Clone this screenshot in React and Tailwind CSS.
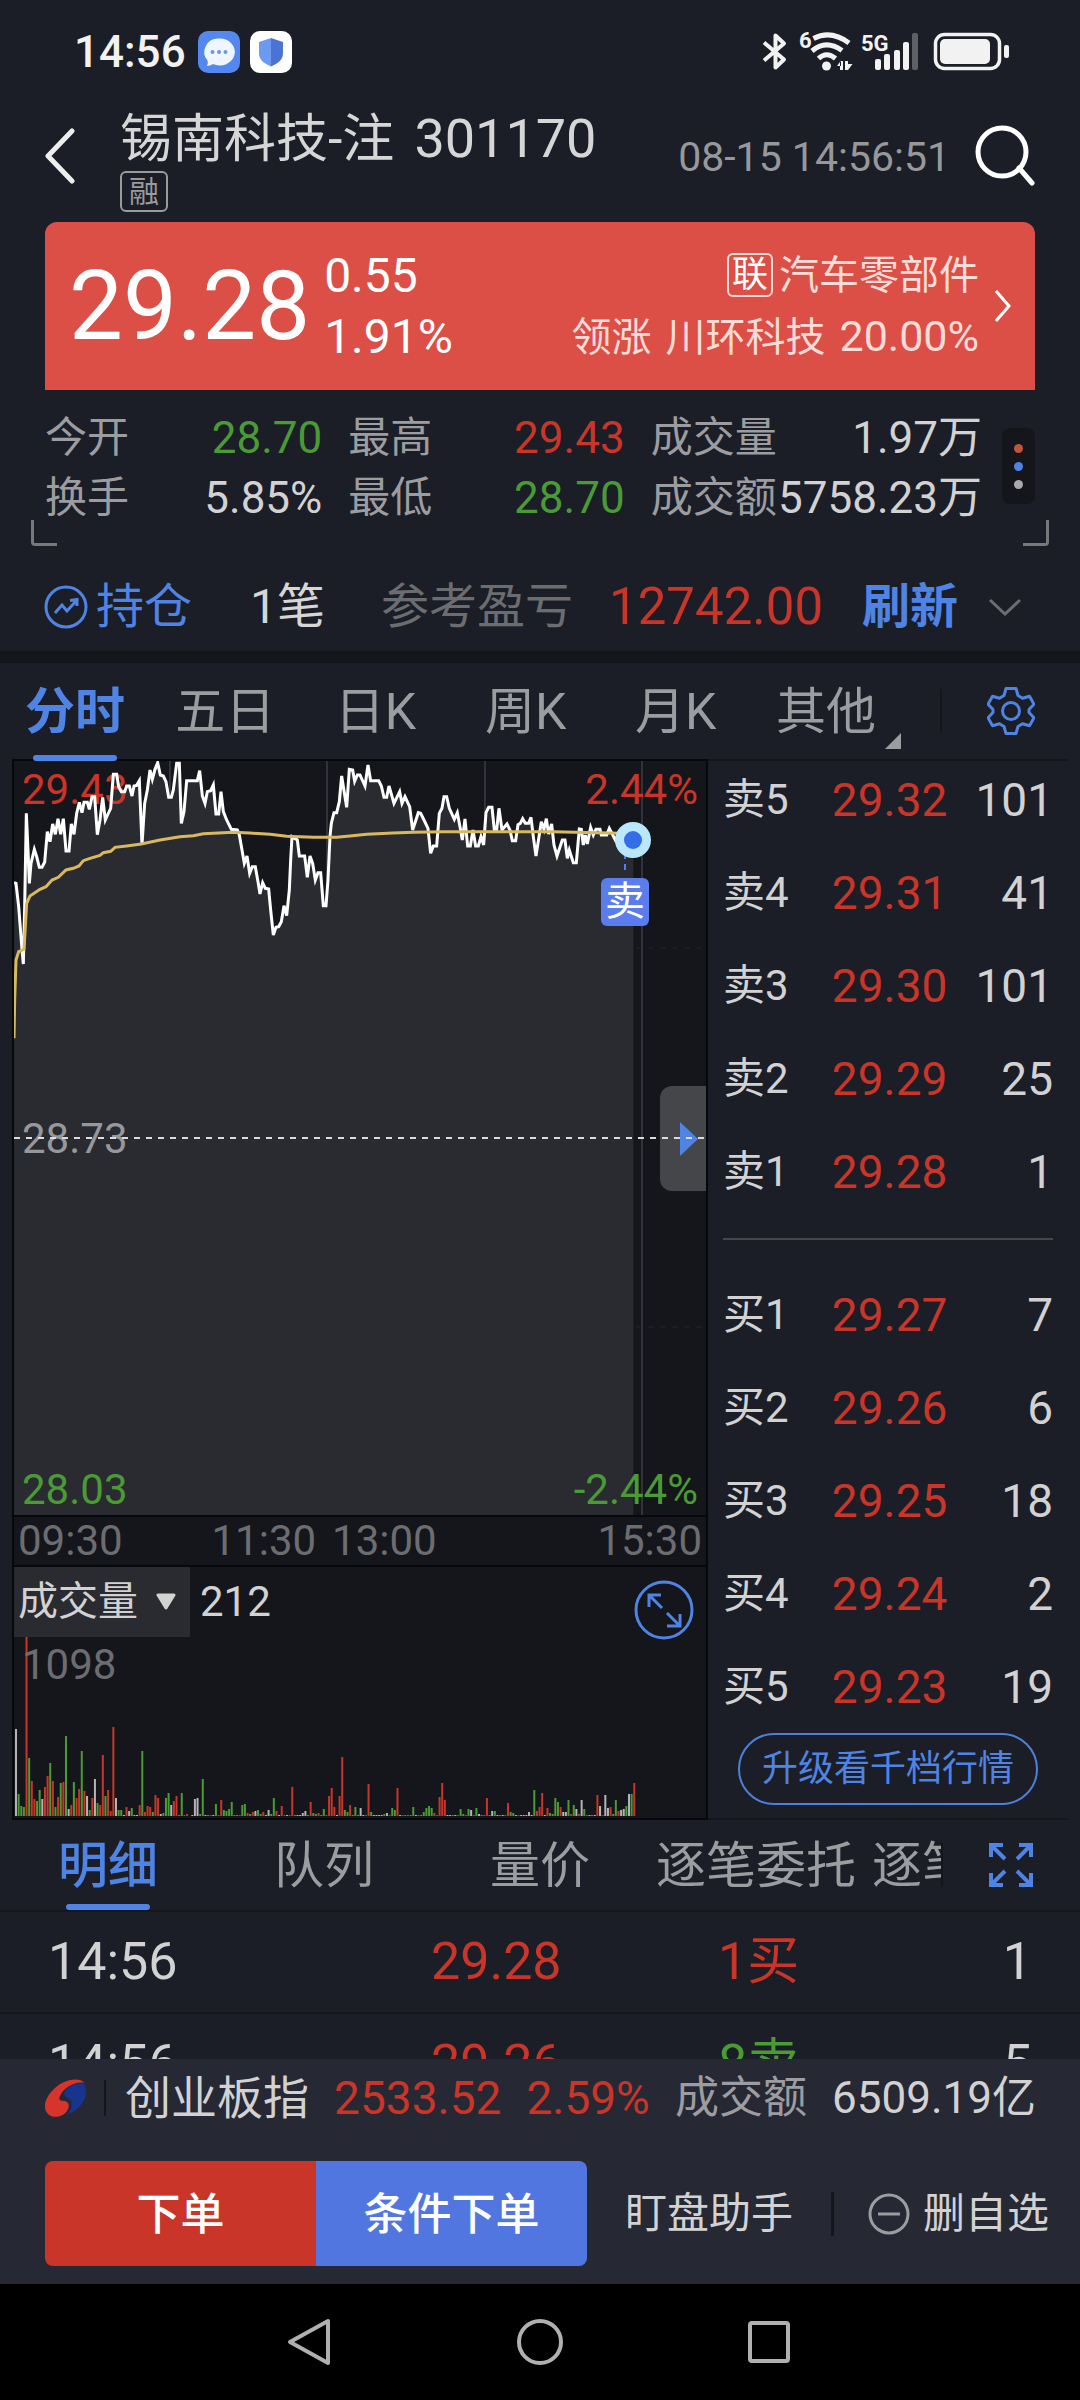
import React, { useState } from "react";

const RED = "#c93529";
const GREEN = "#4a9a35";

const sellOrders = [
  { label: "卖5", price: "29.32", count: 101 },
  { label: "卖4", price: "29.31", count: 41 },
  { label: "卖3", price: "29.30", count: 101 },
  { label: "卖2", price: "29.29", count: 25 },
  { label: "卖1", price: "29.28", count: 1 },
];

const buyOrders = [
  { label: "买1", price: "29.27", count: 7 },
  { label: "买2", price: "29.26", count: 6 },
  { label: "买3", price: "29.25", count: 18 },
  { label: "买4", price: "29.24", count: 2 },
  { label: "买5", price: "29.23", count: 19 },
];

const trades = [
  { time: "14:56", price: "29.28", side: "1买", color: "text-[#c93529]", count: 1 },
  { time: "14:56", price: "29.26", side: "8卖", color: "text-[#4a9a35]", count: 5 },
];

const pricePoints =
  "42,428 48,430 56,500 66,630 70,672 74,500 79,220 84,330 88,430 93,370 103,328 110,350 118,382 126,382 134,366 142,275 150,305 158,252 166,283 174,236 182,283 190,236 198,333 207,333 214,252 222,283 230,220 238,187 246,218 252,187 262,187 268,208 276,170 284,170 292,284 300,240 308,172 316,240 324,222 332,205 340,103 350,103 356,140 364,155 374,155 380,138 388,138 396,168 402,138 410,136 418,122 426,315 434,190 442,150 450,90 457,118 465,88 473,68 481,105 490,108 498,125 506,172 514,172 520,150 530,70 538,70 544,250 552,215 560,122 592,122 599,92 607,168 615,190 622,155 632,152 640,135 648,222 656,222 663,155 670,215 680,240 694,268 712,270 718,285 726,330 733,370 741,348 749,400 757,380 766,380 774,425 780,462 788,428 796,445 806,447 812,510 820,585 828,562 836,560 844,545 852,497 860,527 868,450 872,360 876,290 892,300 898,348 914,348 922,412 930,348 938,370 946,420 954,398 962,398 970,497 978,497 984,420 990,290 994,250 1002,218 1010,218 1018,185 1025,108 1040,202 1048,88 1058,90 1064,124 1072,105 1080,105 1095,138 1104,75 1112,122 1136,122 1144,138 1152,172 1160,172 1167,138 1182,190 1199,155 1206,190 1215,170 1229,200 1238,270 1255,218 1262,220 1272,240 1284,265 1292,340 1300,318 1310,318 1318,220 1326,205 1332,170 1340,170 1348,205 1363,238 1372,218 1380,260 1387,300 1395,237 1403,318 1411,318 1419,270 1427,318 1435,318 1443,290 1451,315 1458,218 1466,202 1476,202 1483,270 1490,270 1497,205 1506,270 1521,252 1530,270 1537,302 1547,302 1554,254 1561,250 1568,236 1576,250 1586,250 1593,232 1600,290 1608,348 1624,245 1632,268 1639,236 1646,282 1655,252 1662,315 1671,348 1687,300 1695,300 1702,355 1708,330 1720,368 1729,368 1738,267 1744,268 1750,315 1756,285 1762,312 1772,262 1780,285 1788,268 1800,268 1804,285 1820,285 1828,265 1846,300 1854,285 1900,300";

const averagePoints =
  "42,895 44,780 48,660 56,635 72,628 76,560 80,490 90,468 120,448 138,440 156,420 175,412 198,390 220,385 237,378 250,362 270,355 300,346 310,338 332,334 345,322 380,318 424,312 480,300 540,290 580,287 610,281 700,277 750,279 810,283 860,289 940,292 1010,292 1050,288 1100,283 1180,279 1240,277 1330,275 1660,275 1860,280";

// one bar per minute: colour letter + height
const volumeBars =
  "w87 g22 g10 g9 r196 g58 r35 r17 g15 g26 w17 r29 r40 g53 r35 g9 r19 g33 r34 g80 w7 r11 g34 r18 r27 g65 r25 w20 g6 r18 w37 g13 r11 r61 g20 r26 r5 r89 w18 g6 g6 w1 r9 w5 g8 w1 w1 r11 g65 r4 r10 r9 g4 r21 r18 w2 g3 g18 g23 w11 r15 r20 g1 g23 r1 r2 w0 w1 w17 w18 g2 g37 w1 g1 r1 w1 g12 r1 r16 g6 g5 g7 g14 g1 g1 r1 g11 g12 r3 g2 r4 w5 g6 g2 r4 w1 w6 g2 g18 r5 w1 r10 r1 w1 r1 r29 g1 w1 w1 w3 w5 g1 r14 g3 g2 r3 g1 g7 r1 r20 r28 r9 w1 r20 r59 g6 g4 r11 g1 g9 g1 w8 w1 r1 r32 g4 w1 w1 w1 w1 g2 w3 r1 g8 g6 r28 w1 r1 g1 r1 g1 g9 w1 r1 g1 g4 g8 g10 g8 r3 r1 r19 r33 r16 w1 w1 g1 w1 r1 g7 g2 r1 g7 w6 r1 g8 w2 g1 r1 r18 g1 w5 g5 w1 g1 w1 r1 r13 g4 g3 w1 r1 w1 w1 w1 w4 w1 g26 r5 r9 r23 w1 r8 g3 g2 g18 g14 r9 w4 w4 g16 r2 g11 w7 r2 w16 g7 r1 w1 g1 w1 r21 w10 r1 w21 w8 r9 g2 g16 r5 w6 w7 g10 w22 g22 r33".split(" ");

const barColors = { r: RED, g: GREEN, w: "#b4b4b6" };

const StatusBar = () => (
  <div className="flex h-26 shrink-0 items-center justify-between pl-[74px] pr-[70px]">
    <div className="flex items-center gap-[10px]">
      <span className="mr-[2px] text-[44px] leading-none font-medium text-[#f2f2f2]">14:56</span>
      <svg className="size-[42px]" viewBox="0 0 42 42">
        <rect width="42" height="42" rx="10" fill="#5488ee" />
        <path d="M21 7.500a15 13.500 0 1 1-6 25.500q-3 2-6 2 1.500-3 .5-5.500A14 13.500 0 0 1 21 7.500z" fill="#eef7ff" />
        <circle cx="14.500" cy="21" r="2" fill="#6f97dd" />
        <circle cx="21" cy="21" r="2" fill="#6f97dd" />
        <circle cx="27.500" cy="21" r="2" fill="#6f97dd" />
      </svg>
      <svg className="size-[42px]" viewBox="0 0 42 42">
        <rect width="42" height="42" rx="10" fill="#ffffff" />
        <path d="M21 7 9 11v11c0 7 5 10.500 12 13.500z" fill="#6c9af0" />
        <path d="M21 7l12 4v11c0 7-5 10.500-12 13.500z" fill="#4b73d3" />
      </svg>
    </div>
    <svg className="h-[42px] w-[250px] overflow-visible" viewBox="0 0 250 42" fill="none" stroke="#f2f2f2">
      <path d="M4 11.500 24 28.500 15.500 36.500V4.500L24 12.500 4 29.500" strokeWidth="4" strokeLinejoin="round" />
      <text x="39" y="17" fontSize="22" fontWeight="700" fill="#f2f2f2" stroke="none">6</text>
      <g strokeWidth="5">
        <path d="M53.500 7.500Q71 -1.500 89 12" />
        <path d="M52 20Q66 8 82 19.500" />
        <path d="M58.500 27.500Q66.500 20 75.500 27.500" />
      </g>
      <circle cx="66.500" cy="35" r="4.500" fill="#f2f2f2" stroke="none" />
      <path d="M77 35h4v-5.500zM80 30h3v9h-3zM85 30h3v9h-3zM88 39v-6h4.500z" fill="#f2f2f2" stroke="none" />
      <text x="101" y="20" fontSize="22" fontWeight="700" fill="#f2f2f2" stroke="none">5G</text>
      <g fill="#f2f2f2" stroke="none">
        <rect x="115" y="28" width="6" height="11" rx="2" />
        <rect x="124" y="23" width="6" height="16" rx="2" />
        <rect x="134" y="19" width="6" height="20" rx="2" />
        <rect x="143" y="11" width="6" height="28" rx="2" />
        <rect x="152" y="2" width="6" height="37" rx="2" fill="#5d6065" />
        <rect x="180" y="8" width="50" height="25" rx="5" />
        <rect x="244" y="14" width="5" height="13" rx="2" />
      </g>
      <rect x="175.500" y="3.500" width="64" height="34" rx="9" strokeWidth="3.500" />
    </svg>
  </div>
);

const Header = () => (
  <header className="flex h-[118px] shrink-0 justify-between pl-[44px] pr-11">
    <div className="flex">
      <button aria-label="返回" className="mr-[45px] mt-[24px] self-start">
        <svg className="h-[56px] w-[31px]" viewBox="0 0 31 56" fill="none" stroke="#eeeeee" strokeWidth="5">
          <path d="M28 3 4 28l24 25" strokeLinecap="round" strokeLinejoin="round" />
        </svg>
      </button>
      <div className="flex flex-col items-start pt-1">
        <h1 className="text-[52px] leading-[62px] text-[#d6d6d6]">
          锡南科技-注<span className="ml-5 text-[54px]">301170</span>
        </h1>
        <span className="rounded-md border-2 border-[#9b9b9d] px-[7px] text-[30px] leading-[37px] text-[#9b9b9d]">
          融
        </span>
      </div>
    </div>
    <div className="flex h-[104px] items-center gap-6">
      <time className="pt-1 text-[41px] text-[#97989b]">08-15 14:56:51</time>
      <button aria-label="搜索">
        <svg className="size-[62px]" viewBox="0 0 62 62" fill="none" stroke="#ffffff" strokeWidth="5">
          <circle cx="28" cy="27" r="24" />
          <path d="M45 43 58 58" strokeLinecap="round" />
        </svg>
      </button>
    </div>
  </header>
);

const PriceBanner = () => (
  <section className="mx-[45px] flex h-[168px] shrink-0 items-center justify-between rounded-t-xl bg-[#dc4f46] pl-6 pr-6 text-white">
    <div className="flex items-center gap-[14px]">
      <span className="text-[96px] leading-none">29.28</span>
      <div className="text-[48px] leading-[61px]">
        <p>0.55</p>
        <p>1.91%</p>
      </div>
    </div>
    <a href="#industry" className="flex items-center gap-4 text-[40px] leading-[61px] text-[#fbdcd8]">
      <div className="text-right">
        <p className="flex items-center justify-end gap-[6px]">
          <span className="rounded-md border-2 border-[#fbdcd8] px-[3px] text-[36px] leading-[40px] text-white">联</span>
          汽车零部件
        </p>
        <p className="flex items-baseline justify-end gap-[14px]">
          <span>领涨</span>
          <span>川环科技</span>
          <span className="text-[43px]">20.00%</span>
        </p>
      </div>
      <svg className="h-[32px] w-[16px]" viewBox="0 0 16 32" fill="none" stroke="#ffffff" strokeWidth="3">
        <path d="M1 1 14 16 1 31" />
      </svg>
    </a>
  </section>
);

const Stat = ({ label, value, color = "text-[#d2d2d3]" }) => (
  <div className="flex items-center justify-between">
    <dt className="text-[42px] text-[#9c9da0]">{label}</dt>
    <dd className={`text-[44px] ${color}`}>{value}</dd>
  </div>
);

const Stats = () => (
  <section className="relative mx-[31px] h-[156px] shrink-0 pl-[14px] pr-[14px] pt-[18px]">
    <div className="flex items-center">
      <dl className="grid flex-1 grid-cols-[277fr_276fr_331fr] gap-x-[26px] leading-[60px]">
        <Stat label="今开" value="28.70" color="text-[#4a9a35]" />
        <Stat label="最高" value="29.43" color="text-[#c93529]" />
        <Stat label="成交量" value="1.97万" />
        <Stat label="换手" value="5.85%" />
        <Stat label="最低" value="28.70" color="text-[#4a9a35]" />
        <Stat label="成交额" value="5758.23万" />
      </dl>
      <button aria-label="更多指标" className="mb-1 ml-5 flex h-[76px] w-[33px] flex-col items-center justify-center gap-[9px] rounded-lg bg-[#15161b]">
        <span className="size-[9px] rounded-full bg-[#c0553f]" />
        <span className="size-[9px] rounded-full bg-[#4f83e4]" />
        <span className="size-[9px] rounded-full bg-[#a9a9aa]" />
      </button>
    </div>
    <span className="absolute bottom-0 left-0 size-[26px] rounded-bl border-b-3 border-l-3 border-[#77787b]" />
    <span className="absolute bottom-0 right-0 size-[26px] rounded-br border-b-3 border-r-3 border-[#77787b]" />
  </section>
);

const Position = () => (
  <section className="flex h-[117px] shrink-0 items-center border-b-12 border-[#15161b] pl-11 pr-[58px] pt-4 text-[48px] leading-none">
    <svg className="mr-2 size-[44px]" viewBox="0 0 44 44" fill="none" stroke="#4f83e4" strokeWidth="3">
      <circle cx="22" cy="22" r="20" />
      <path d="M11 28 18 20l5 6 10-11M26 15.500 33 14.500V21" />
    </svg>
    <span className="text-[#4f83e4]">持仓</span>
    <span className="ml-[58px] text-[#d6d6d6]">1笔</span>
    <span className="ml-14 text-[#6c6d70]">参考盈亏</span>
    <span className="ml-9 text-[51px] text-[#c93529]">12742.00</span>
    <button className="ml-auto font-bold text-[#4f83e4]">刷新</button>
    <button aria-label="展开" className="ml-[30px]">
      <svg className="h-[18px] w-[34px]" viewBox="0 0 34 18" fill="none" stroke="#6c6d70" strokeWidth="3">
        <path d="M2 2 17 16 32 2" />
      </svg>
    </button>
  </section>
);

const ChartTabs = () => {
  const [active, setActive] = useState("分时");
  return (
    <nav className="flex h-[96px] shrink-0 items-center pr-[45px]">
      <div className="grid h-full flex-1 grid-cols-6 pr-[39px]">
        {["分时", "五日", "日K", "周K", "月K", "其他"].map((tab) => (
          <button
            key={tab}
            onClick={() => setActive(tab)}
            className={`relative h-full text-[50px] leading-[98px] ${
              active === tab ? "font-bold text-[#4f83e4]" : "text-[#9c9da0]"
            }`}
          >
            {tab}
            {active === tab && (
              <span className="absolute bottom-0 left-1/2 h-[6px] w-[84px] -translate-x-1/2 rounded-full bg-[#4f83e4]" />
            )}
            {tab === "其他" && (
              <svg className="absolute bottom-3 right-0 size-4" viewBox="0 0 16 16" fill="#9c9da0">
                <path d="M16 0v16H0z" />
              </svg>
            )}
          </button>
        ))}
      </div>
      <span className="mr-[45px] h-[44px] w-[2px] bg-[#15161b]" />
      <button aria-label="设置">
        <svg className="size-[48px]" viewBox="0 0 48 48" fill="none" stroke="#4f83e4" strokeWidth="3" strokeLinejoin="round">
          <path d="M19 1.500h10l2 7 4.500 2.700 7-2 4.500 8-5 5.300v3l5 5.300-4.500 8-7-2L31 39.500l-2 7H19l-2-7-4.500-2.700-7 2-4.500-8 5-5.300v-3l-5-5.300 4.500-8 7 2L17 8.500z" />
          <circle cx="24" cy="24" r="8.500" />
        </svg>
      </button>
    </nav>
  );
};

const PriceChart = () => (
  <div className="relative border-b-2 border-[#07080b] text-[42px] leading-none">
    <svg className="block h-auto w-full" viewBox="0 0 692 754">
      <g stroke="#33343b" strokeWidth="2">
        <path d="M156 0v754M313 0v754M471 0v754M628 0v754" />
      </g>
      <g transform="translate(-14 -21) scale(.33333)">
        <polygon points={`${pricePoints} 1900,2330 42,2330`} fill="#2a2b30" />
      </g>
      <path d="M622 187h70M622 566h70" stroke="#24252b" strokeWidth="1" strokeDasharray="6 6" />
    </svg>
    <span className="absolute left-2 top-2 text-[#c93529]">29.43</span>
    <span className="absolute right-2 top-2 text-[#c93529]">2.44%</span>
    <span className="absolute left-2 top-[357px] text-[#97989b]">28.73</span>
    <span className="absolute bottom-1 left-2 text-[#4a9a35]">28.03</span>
    <span className="absolute bottom-1 right-2 text-[#4a9a35]">-2.44%</span>
    <button aria-label="收起盘口" className="absolute right-0 top-[325px] flex h-[105px] w-[46px] items-center justify-end rounded-l-xl bg-[#45464a] pr-2">
      <svg className="h-[34px] w-[18px]" viewBox="0 0 18 34" fill="#4f83e4">
        <path d="M0 0 18 17 0 34z" />
      </svg>
    </button>
    <svg className="pointer-events-none absolute inset-0 h-auto w-full" viewBox="0 0 692 754" fill="none">
      <path d="M0 377h692" stroke="#dcdcdc" strokeWidth="2" strokeDasharray="6 6" />
      <g transform="translate(-14 -21) scale(.33333)" strokeWidth="9">
        <polyline points={pricePoints} stroke="#ffffff" />
        <polyline points={averagePoints} stroke="#d9b95f" />
      </g>
      <path d="M611 92v20" stroke="#5a7cec" strokeWidth="2" strokeDasharray="6 5" />
      <circle cx="619" cy="79" r="18" fill="#b9e8fc" />
      <circle cx="619" cy="79" r="9" fill="#346de8" />
    </svg>
    <span className="absolute left-[587px] top-[117px] size-12 rounded-md bg-[#5a7cec] text-center text-[40px] leading-[48px] text-white">
      卖
    </span>
  </div>
);

const VolumeChart = () => (
  <div className="relative text-[42px] leading-none">
    <svg className="block h-auto w-full" viewBox="0 0 692 249">
      {volumeBars.map((bar, i) => (
        <rect
          key={i}
          x={1 + i * 2.631}
          y={249 - Number(bar.slice(1))}
          width="2"
          height={Number(bar.slice(1))}
          fill={barColors[bar[0]]}
        />
      ))}
    </svg>
    <div className="absolute inset-x-0 top-0 flex items-start justify-between pr-3">
      <div className="flex items-center gap-[10px]">
        <button className="flex h-[70px] items-center gap-[18px] bg-[#2a2b30] pl-1 pr-[14px] text-[40px] text-[#d2d2d3]">
          成交量
          <svg className="h-[17px] w-[20px]" viewBox="0 0 20 17" fill="#d2d2d3" stroke="#d2d2d3" strokeWidth="3" strokeLinejoin="round">
            <path d="M2 2h16l-8 13z" />
          </svg>
        </button>
        <span className="text-[#d2d2d3]">212</span>
      </div>
      <button aria-label="放大" className="mt-[13px]">
        <svg className="size-[60px]" viewBox="0 0 60 60" fill="none" stroke="#4f83e4" strokeWidth="3">
          <circle cx="30" cy="30" r="28" />
          <path d="M15 27V15h12M15 15l13 13M46 34v12H33M46 46 33 33" />
        </svg>
      </button>
    </div>
    <span className="absolute left-2 top-[77px] text-[#6c6d70]">1098</span>
  </div>
);

const OrderRows = ({ rows }) =>
  rows.map((row) => (
    <tr key={row.label} className="h-[93px]">
      <td className="text-[42px] text-[#d2d2d3]">{row.label}</td>
      <td className="text-right text-[46px] text-[#c93529]">{row.price}</td>
      <td className="text-right text-[46px] text-[#d2d2d3]">{row.count}</td>
    </tr>
  ));

const OrderBook = () => (
  <aside className="mr-3 flex flex-1 flex-col border-y-2 border-[#15161b] pl-[15px] pr-[15px] leading-none">
    <table className="mt-[-8px] w-full table-fixed">
      <colgroup>
        <col className="w-[28%]" />
        <col className="w-[40%]" />
        <col className="w-[32%]" />
      </colgroup>
      <tbody>
        <OrderRows rows={sellOrders} />
      </tbody>
    </table>
    <hr className="mb-[28px] mt-[20px] border-t-2 border-[#45474d]" />
    <table className="w-full table-fixed">
      <colgroup>
        <col className="w-[28%]" />
        <col className="w-[40%]" />
        <col className="w-[32%]" />
      </colgroup>
      <tbody>
        <OrderRows rows={buyOrders} />
      </tbody>
    </table>
    <button className="mx-[15px] mt-auto mb-[13px] h-[72px] rounded-full border-2 border-[#4f7fd8] text-[36px] text-[#4f83e4]">
      升级看千档行情
    </button>
  </aside>
);

const DetailTabs = () => {
  const [active, setActive] = useState("明细");
  return (
    <nav className="flex h-[92px] shrink-0 items-center border-b-2 border-[#15161b] pr-[47px]">
      <div className="flex h-full flex-1 overflow-hidden">
        {["明细", "队列", "量价", "逐笔委托", "逐笔成交"].map((tab) => (
          <button
            key={tab}
            onClick={() => setActive(tab)}
            className={`relative h-full w-1/5 min-w-54 shrink-0 text-[50px] leading-[92px] ${
              active === tab ? "font-medium text-[#4f83e4]" : "text-[#9c9da0]"
            }`}
          >
            {tab}
            {active === tab && (
              <span className="absolute bottom-0 left-1/2 h-[6px] w-[84px] -translate-x-1/2 rounded-full bg-[#4f83e4]" />
            )}
          </button>
        ))}
      </div>
      <span className="mr-[46px] h-[44px] w-[2px] bg-[#15161b]" />
      <button aria-label="全屏">
        <svg className="size-[44px]" viewBox="0 0 44 44" fill="none" stroke="#4f83e4" strokeWidth="4">
          <path d="M2 14V2h12M2 2l14 14M30 2h12v12M42 2 28 16M2 30v12h12M2 42l14-14M42 30v12H30M42 42 28 28" />
        </svg>
      </button>
    </nav>
  );
};

const TradeList = () => (
  <div className="min-h-0 flex-1 overflow-hidden">
    <table className="w-full table-fixed text-[52px] leading-none">
      <tbody>
        {trades.map((trade, i) => (
          <tr key={i} className="h-[101px] border-b-2 border-[#15161b]">
            <td className="w-[29%] pl-12 text-[#d2d2d3]">{trade.time}</td>
            <td className="w-[23%] text-right text-[#c93529]">{trade.price}</td>
            <td className={`w-[22%] text-right ${trade.color}`}>{trade.side}</td>
            <td className="w-[26%] pr-12 text-right text-[#d2d2d3]">{trade.count}</td>
          </tr>
        ))}
      </tbody>
    </table>
  </div>
);

const BottomBar = () => (
  <footer className="shrink-0 bg-[#262833] text-[#d2d2d3]">
    <div className="flex h-[78px] items-center justify-between pl-[44px] pr-[44px] text-[44px] leading-none">
      <div className="flex items-center">
        <svg className="mr-[17px] h-[40px] w-[43px]" viewBox="0 0 43 40">
          <path d="M41 5C35-1 21 1 11 10 1 19-2 30 4 36c5 5 15 3 19-3 3-5 2-9-2-10-5 0-7-1-5-5C20 9 32 3 41 5z" fill="#d7352c" />
          <path d="M40 6c5 8 1 24-17 31 6-7 6-15 1-17-5-2-5-5-1-9 5-5 12-7 17-5z" fill="#17348f" />
        </svg>
        <span className="mr-[19px] h-[36px] w-[2px] bg-[#15161b]" />
        <span className="text-[46px]">创业板指</span>
      </div>
      <span className="text-[46px] text-[#c93529]">2533.52</span>
      <span className="text-[46px] text-[#c93529]">2.59%</span>
      <span className="text-[#9c9da0]">成交额</span>
      <span>6509.19亿</span>
    </div>
    <div className="flex items-center pb-[18px] pl-[45px] pr-[31px] pt-6">
      <div className="flex h-[105px] flex-1 overflow-hidden rounded-lg text-[44px] leading-[48px] font-medium text-white">
        <button className="flex-1 bg-[#c93529] pt-[2px]">下单</button>
        <button className="flex-1 bg-[#5276e0] pt-[2px]">条件下单</button>
      </div>
      <button className="ml-[38px] text-[42px]">盯盘助手</button>
      <span className="ml-[38px] mr-[34px] h-[44px] w-[3px] bg-[#15161b]" />
      <button className="flex items-center gap-[13px] text-[42px]">
        <svg className="size-[42px]" viewBox="0 0 42 42" fill="none" stroke="#9c9da0" strokeWidth="3">
          <circle cx="21" cy="21" r="19" />
          <path d="M10 21h22" />
        </svg>
        删自选
      </button>
    </div>
  </footer>
);

const SystemNav = () => (
  <div className="flex h-[116px] shrink-0 items-center justify-center gap-[183px] bg-black">
    <button aria-label="系统返回">
      <svg className="size-[48px]" viewBox="0 0 48 48" fill="none" stroke="#b0b0b0" strokeWidth="4" strokeLinejoin="round">
        <path d="M43 3v42L5 24z" />
      </svg>
    </button>
    <button aria-label="主页">
      <svg className="size-[48px]" viewBox="0 0 48 48" fill="none" stroke="#b0b0b0" strokeWidth="4">
        <circle cx="24" cy="24" r="21" />
      </svg>
    </button>
    <button aria-label="最近任务">
      <svg className="size-[48px]" viewBox="0 0 48 48" fill="none" stroke="#b0b0b0" strokeWidth="4">
        <rect x="3" y="5" width="38" height="38" rx="2" />
      </svg>
    </button>
  </div>
);

const App = () => {
  return (
    <div className="flex h-screen flex-col bg-[#1b1e26] font-[Roboto,'Noto_Sans_CJK_SC',sans-serif]">
      <StatusBar />
      <Header />
      <PriceBanner />
      <Stats />
      <Position />
      <ChartTabs />
      <main className="flex shrink-0">
        <div className="ml-3 w-[64.444%] border-2 border-[#07080b] bg-[#15161b]">
          <PriceChart />
          <div className="flex h-[50px] items-center border-b-2 border-[#07080b] px-1 text-[42px] leading-none text-[#6c6d70]">
            <span>09:30</span>
            <span className="ml-[13%]">11:30</span>
            <span className="ml-4">13:00</span>
            <span className="ml-auto">15:30</span>
          </div>
          <VolumeChart />
        </div>
        <OrderBook />
      </main>
      <DetailTabs />
      <TradeList />
      <BottomBar />
      <SystemNav />
    </div>
  );
};

export default App;
